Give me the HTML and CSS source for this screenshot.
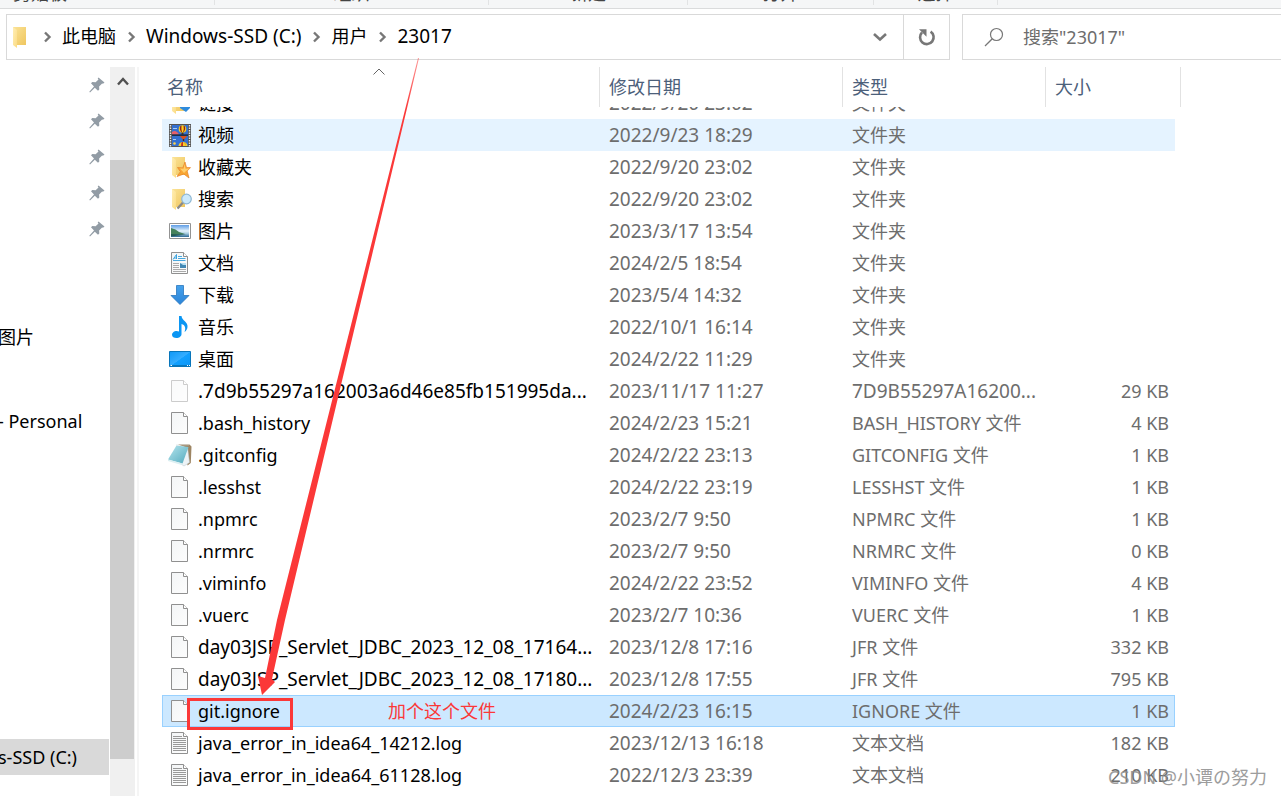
FILE: index.html
```html
<!DOCTYPE html>
<html lang="zh-CN">
<head>
<meta charset="utf-8">
<title>23017</title>
<link rel="stylesheet" href="styles.css">
</head>
<body>
<svg class="defs" aria-hidden="true">
  <defs>
    <linearGradient id="gFold" x1="0" y1="0" x2="1" y2="1"><stop offset="0" stop-color="#fbe397"/><stop offset="1" stop-color="#efc65f"/></linearGradient>
    <linearGradient id="gFoldFront" x1="0" y1="0" x2="1" y2="1"><stop offset="0" stop-color="#ffeeb5"/><stop offset="1" stop-color="#fbdb83"/></linearGradient>
    <linearGradient id="gSky" x1="0" y1="0" x2="0" y2="1"><stop offset="0" stop-color="#5e9de6"/><stop offset=".5" stop-color="#e3f2fb"/><stop offset=".7" stop-color="#a9cde0"/><stop offset="1" stop-color="#2a6795"/></linearGradient>
    <linearGradient id="gDown" x1="0" y1="0" x2="0" y2="1"><stop offset="0" stop-color="#45a2ed"/><stop offset="1" stop-color="#2b84d8"/></linearGradient>
    <linearGradient id="gDesk" x1="0" y1="0" x2="1" y2="1"><stop offset="0" stop-color="#0f98f7"/><stop offset=".5" stop-color="#35adff"/><stop offset=".52" stop-color="#12a0ff"/><stop offset="1" stop-color="#0c95f5"/></linearGradient>
    <linearGradient id="gPaper" x1="0" y1="0" x2="1" y2="1"><stop offset="0" stop-color="#f3f5f6"/><stop offset="1" stop-color="#fdfdfd"/></linearGradient>
    <linearGradient id="gNote" x1="0" y1="0" x2="1" y2="1"><stop offset="0" stop-color="#b5e5ee"/><stop offset="1" stop-color="#53aabd"/></linearGradient>
  </defs>
  <symbol id="folder" viewBox="0 0 24 24"><path d="M4 2h13v18H4z" fill="url(#gFold)"/><path d="M4 2l4 3v18l-4-3z" fill="url(#gFoldFront)"/></symbol>
  <symbol id="links" viewBox="0 0 24 24"><use href="#folder"/><path d="M12 12h7v3l3-2v4l-4 4-6-4z" fill="#2f8bdc"/></symbol>
  <symbol id="fav" viewBox="0 0 24 24"><use href="#folder"/><path d="M17 7l1.500 5.600H22.500l-3.300 3.400L21 23l-5.200-4L9 21.500l3.400-4.800L9.500 12.500l5.300.4z" fill="#f9a531" stroke="#e5812a" stroke-width=".7"/><path d="M16.800 9l.7 4.800 4-.4-3.500 2.700-2 2-4-4.500 3.500.2z" fill="#ffce6b"/></symbol>
  <symbol id="searches" viewBox="0 0 24 24"><use href="#folder"/><path d="M15 15.500L9.500 21.500" stroke="#8a8a8a" stroke-width="2.400"/><circle cx="18.500" cy="12" r="4.800" fill="#cbe9fb" stroke="#8fb7d3" stroke-width="1.200"/></symbol>
  <symbol id="video" viewBox="0 0 24 24"><path d="M1 1h22v23H1z" fill="#555"/><path d="M4 2h16v21H4z" fill="#3470d0"/><path d="M2.500 2v22M21.500 2v22" stroke="#e8e8e8" stroke-width="1.400" stroke-dasharray="1.500 1"/><path d="M4 9q4-3 7 2.500H4z" fill="#e7606a"/><path d="M5 5.500h4M5 16.500h3" stroke="#a9cdf5"/><circle cx="14.500" cy="6" r="3.800" fill="#ffce1a"/><path d="M12 3.500q-1 3 1 5.500h1q-1-3-.5-6.500zM17 3.500q1 3-1 5.500h-.8q1-3 .3-6.500z" fill="#8d2520"/><path d="M13.500 9.500h2v2h-2z" fill="#53320f"/><path d="M4 11.500h16v1.200H4z" fill="#151515"/><path d="M12 13h7l-2.500 3h-2z" fill="#d9501f"/><path d="M14.800 16h1.400v2h-1.400z" fill="#53320f"/><path d="M10.500 23q.5-4 4.500-4t4.500 4z" fill="#f7ce28"/><path d="M13 23q0-3 1-4h1v4zM17.500 23q0-3-1-4" fill="#c82d20"/><circle cx="6.500" cy="20.500" r="1.300" fill="#ffd34b"/></symbol>
  <symbol id="picture" viewBox="0 0 24 24"><path d="M1.500 4.500h21v15h-21z" fill="#fff" stroke="#939393"/><path d="M3 6h18v12H3z" fill="url(#gSky)"/><path d="M3 9q5 1 8 4l6 2-14 1z" fill="#45815b"/><path d="M3 15l15 .5-15 2z" fill="#245b55"/></symbol>
  <symbol id="blank" viewBox="0 0 24 24"><path d="M3.500 1.500h12l4 4v17h-16z" fill="url(#gPaper)" stroke="#909090"/><path d="M15.500 1.500v4h4" fill="#fff" stroke="#909090"/></symbol>
  <symbol id="document" viewBox="0 0 24 24"><use href="#blank"/><path d="M5 8.500L8.500 3.500V8M6 7h3" fill="none" stroke="#38a2df"/><path d="M10 5.500h4M10 7.500h7.500M5 9.500h12.500" stroke="#49a9df"/><path d="M5 12.500h6M5 14.500h6M5 16.500h6M5 18.500h13M5 20.500h13" stroke="#aaa"/><path d="M12 12h6v5h-6z" fill="#4389b5"/><path d="M12 12h6v2h-3z" fill="#b9e0f2"/></symbol>
  <symbol id="download" viewBox="0 0 24 24"><path d="M8.500 2.500h7v10h5.500l-9 9-9-9h5.500z" fill="url(#gDown)" stroke="#2a76bd" stroke-width=".8"/></symbol>
  <symbol id="music" viewBox="0 0 24 24"><path d="M11 1h2.500c.5 5 6.500 5.500 6 11-.2 2.500-1.600 4-3 5 1.500-4 .8-7-3-8v10c0 2.500-2.500 4-5 4s-4.500-1-4.500-3.200S6.500 16 8.500 16c1 0 1.800.2 2.500.5z" fill="#0b96f3"/></symbol>
  <symbol id="desktop" viewBox="0 0 24 24"><path d="M1.500 4.500h21v15h-21z" fill="url(#gDesk)" stroke="#0875ba"/><path d="M2 18.500h20" stroke="#0877bd"/><path d="M2.500 18.500h1.500M19 18.500h1M21 18.500h1" stroke="#fff"/></symbol>
  <symbol id="note" viewBox="0 0 24 24"><path d="M10 1.500h11.500l2 2-.7 16.500-3.300 2.500L17 4z" fill="#9d8563"/><path d="M19.500 4L21.500 19.500 16 23l-3-2z" fill="#edf3f6" stroke="#b5c4cc" stroke-width=".5"/><path d="M8.500 2.500L20.500 4 14.500 20.500 0 16.500z" fill="url(#gNote)"/><path d="M0 16.500l14.500 4-1 1.500L0 18z" fill="#dceff2"/><path d="M8.500 2h12.500" stroke="#c9d2d4" stroke-dasharray="1 1"/></symbol>
  <symbol id="log" viewBox="0 0 24 24"><use href="#blank"/><path d="M5 5.500h9M5 7.500h13M5 9.500h13M5 11.500h13M5 13.500h13M5 15.500h13M5 17.500h13M5 19.500h13" stroke="#999"/></symbol>
  <symbol id="pin" viewBox="0 0 16 16"><path d="M9.500.5l6 5-1.500 1.200-.9-.3-3 3 .2 3.100-1.300 1.200-3.200-3L1 15.500l-.7-.7L5 9.500 2 6.300 3.300 5l3.300.2 2.900-2.600-.8-1z" fill="#929ca5"/></symbol>
  <symbol id="sep" viewBox="0 0 8 12"><path d="M1.500 1.500L6 6l-4.500 4.500" fill="none" stroke="#777" stroke-width="2.400"/></symbol>
</svg>

<header class="ribbon">
  <span class="group g1">剪贴板</span><span class="group g2">组织</span><span class="group g3">新建</span><span class="group g4">打开</span><span class="group g5">选择</span>
</header>

<div class="toolbar">
  <div class="address">
    <svg class="icon" viewBox="0 0 24 24"><use href="#folder"/></svg>
    <nav class="crumbs">
      <svg class="sep"><use href="#sep"/></svg><a href="#">此电脑</a>
      <svg class="sep"><use href="#sep"/></svg><a class="latin" href="#">Windows-SSD (C:)</a>
      <svg class="sep"><use href="#sep"/></svg><a href="#">用户</a>
      <svg class="sep"><use href="#sep"/></svg><a class="latin" href="#">23017</a>
    </nav>
    <button class="drop" aria-label="历史"><svg width="16" height="10" viewBox="0 0 16 10"><path d="M2 2l6 5.500L14 2" fill="none" stroke="#777" stroke-width="2.600"/></svg></button>
    <button class="refresh" aria-label="刷新"><svg width="18" height="18" viewBox="0 0 18 18"><path d="M12.600 3.600A6.800 6.800 0 1 1 4 4.500" fill="none" stroke="#777" stroke-width="2.600"/><path d="M1 1.200h7.500v7.500z" fill="#777"/></svg></button>
  </div>
  <label class="search">
    <svg width="20" height="20" viewBox="0 0 20 20"><circle cx="12.500" cy="7.500" r="6" fill="none" stroke="#777" stroke-width="1.200"/><path d="M8.300 11.800L1 19" stroke="#777" stroke-width="1.300"/></svg>
    <input type="text" aria-label="搜索" placeholder='搜索"23017"'>
  </label>
</div>

<main class="main">
  <aside class="side">
    <div class="item"><svg class="pin"><use href="#pin"/></svg></div>
    <div class="item"><svg class="pin"><use href="#pin"/></svg></div>
    <div class="item"><svg class="pin"><use href="#pin"/></svg></div>
    <div class="item"><svg class="pin"><use href="#pin"/></svg></div>
    <div class="item"><svg class="pin"><use href="#pin"/></svg></div>
    <a class="item pics" href="#"><span>图片</span></a>
    <a class="item drive" href="#"><span>- Personal</span></a>
    <a class="item disk" href="#"><span>s-SSD (C:)</span></a>
  </aside>
  <div class="scroll"><svg class="up" width="12" height="9" viewBox="0 0 12 9"><path d="M1 7.500L6 2l5 5.500" fill="none" stroke="#505050" stroke-width="2.400"/></svg><div class="thumb"></div></div>
  <section class="files">
    <table>
      <colgroup><col class="c1"><col class="c2"><col class="c3"><col class="c4"><col class="c5"></colgroup>
      <thead><tr><th>名称<svg class="sort" width="12" height="7" viewBox="0 0 12 7"><path d="M.5 6.500L6 1l5.500 5.500" fill="none" stroke="#666"/></svg></th><th>修改日期</th><th>类型</th><th>大小</th><th></th></tr></thead>
      <tbody>
        <tr class="cut"><td><div class="name"><svg class="icon"><use href="#links"/></svg>链接</div></td><td><div>2022/9/20 23:02</div></td><td><div>文件夹</div></td><td></td></tr>
        <tr class="hover"><td><div class="name"><svg class="icon"><use href="#video"/></svg>视频</div></td><td>2022/9/23 18:29</td><td>文件夹</td><td></td></tr>
        <tr><td><div class="name"><svg class="icon"><use href="#fav"/></svg>收藏夹</div></td><td>2022/9/20 23:02</td><td>文件夹</td><td></td></tr>
        <tr><td><div class="name"><svg class="icon"><use href="#searches"/></svg>搜索</div></td><td>2022/9/20 23:02</td><td>文件夹</td><td></td></tr>
        <tr><td><div class="name"><svg class="icon"><use href="#picture"/></svg>图片</div></td><td>2023/3/17 13:54</td><td>文件夹</td><td></td></tr>
        <tr><td><div class="name"><svg class="icon"><use href="#document"/></svg>文档</div></td><td>2024/2/5 18:54</td><td>文件夹</td><td></td></tr>
        <tr><td><div class="name"><svg class="icon"><use href="#download"/></svg>下载</div></td><td>2023/5/4 14:32</td><td>文件夹</td><td></td></tr>
        <tr><td><div class="name"><svg class="icon"><use href="#music"/></svg>音乐</div></td><td>2022/10/1 16:14</td><td>文件夹</td><td></td></tr>
        <tr><td><div class="name"><svg class="icon"><use href="#desktop"/></svg>桌面</div></td><td>2024/2/22 11:29</td><td>文件夹</td><td></td></tr>
        <tr><td><div class="name latin"><svg class="icon faint"><use href="#blank"/></svg>.7d9b55297a162003a6d46e85fb151995da...</div></td><td>2023/11/17 11:27</td><td class="latin">7D9B55297A16200...</td><td>29 KB</td></tr>
        <tr><td><div class="name"><svg class="icon"><use href="#blank"/></svg>.bash_history</div></td><td>2024/2/23 15:21</td><td>BASH_HISTORY 文件</td><td>4 KB</td></tr>
        <tr><td><div class="name"><svg class="icon"><use href="#note"/></svg>.gitconfig</div></td><td>2024/2/22 23:13</td><td>GITCONFIG 文件</td><td>1 KB</td></tr>
        <tr><td><div class="name"><svg class="icon"><use href="#blank"/></svg>.lesshst</div></td><td>2024/2/22 23:19</td><td>LESSHST 文件</td><td>1 KB</td></tr>
        <tr><td><div class="name"><svg class="icon"><use href="#blank"/></svg>.npmrc</div></td><td>2023/2/7 9:50</td><td>NPMRC 文件</td><td>1 KB</td></tr>
        <tr><td><div class="name"><svg class="icon"><use href="#blank"/></svg>.nrmrc</div></td><td>2023/2/7 9:50</td><td>NRMRC 文件</td><td>0 KB</td></tr>
        <tr><td><div class="name"><svg class="icon"><use href="#blank"/></svg>.viminfo</div></td><td>2024/2/22 23:52</td><td>VIMINFO 文件</td><td>4 KB</td></tr>
        <tr><td><div class="name"><svg class="icon"><use href="#blank"/></svg>.vuerc</div></td><td>2023/2/7 10:36</td><td>VUERC 文件</td><td>1 KB</td></tr>
        <tr><td><div class="name latin"><svg class="icon"><use href="#blank"/></svg>day03JSP_Servlet_JDBC_2023_12_08_17164...</div></td><td>2023/12/8 17:16</td><td>JFR 文件</td><td>332 KB</td></tr>
        <tr><td><div class="name latin"><svg class="icon"><use href="#blank"/></svg>day03JSP_Servlet_JDBC_2023_12_08_17180...</div></td><td>2023/12/8 17:55</td><td>JFR 文件</td><td>795 KB</td></tr>
        <tr class="selected"><td><div class="name"><svg class="icon"><use href="#blank"/></svg>git.ignore</div></td><td>2024/2/23 16:15</td><td>IGNORE 文件</td><td>1 KB</td></tr>
        <tr><td><div class="name"><svg class="icon"><use href="#log"/></svg>java_error_in_idea64_14212.log</div></td><td>2023/12/13 16:18</td><td>文本文档</td><td>182 KB</td></tr>
        <tr><td><div class="name"><svg class="icon"><use href="#log"/></svg>java_error_in_idea64_61128.log</div></td><td>2022/12/3 23:39</td><td>文本文档</td><td>210 KB</td></tr>
      </tbody>
    </table>
  </section>
</main>

<svg class="arrow" width="440" height="700" viewBox="0 0 440 700" aria-hidden="true">
  <defs><linearGradient id="gArrow" gradientUnits="userSpaceOnUse" x1="0" y1="56" x2="0" y2="110"><stop offset="0" stop-color="#fb3838" stop-opacity=".5"/><stop offset="1" stop-color="#fb3838"/></linearGradient></defs>
  <path d="M418 58h1L285 620 272 679 275 682 262 695 258 676 265 678 277 620z" fill="url(#gArrow)"/>
</svg>
<div class="mark"></div>
<div class="remark">加个这个文件</div>
<div class="watermark">CSDN @小谭の努力</div>
</body>
</html>
```
FILE: styles.css
```css
* { box-sizing: border-box; }
body {
  margin: 0;
  height: 100vh;
  overflow: hidden;
  display: flex;
  flex-direction: column;
  background: #fff;
  color: #000;
  font: 18px/32px "Noto Sans", "Noto Sans CJK SC", sans-serif;
}
a { color: inherit; text-decoration: none; }
button { border: 0; padding: 0; background: none; display: flex; align-items: center; justify-content: center; }
.defs { position: absolute; width: 0; height: 0; }
.latin { font-size: 19px; }

.ribbon {
  display: flex;
  align-items: flex-start;
  flex: none;
  height: 9px;
  overflow: hidden;
  background: #f5f6f7;
  border-bottom: 1px solid #dadbdc;
}
.group {
  height: 5px;
  display: flex;
  align-items: flex-end;
  justify-content: center;
  padding-bottom: 2px;
  border-right: 1px solid #e2e3e4;
  color: #444;
  line-height: 20px;
}
.g1 { width: 215px; padding-right: 134px; }
.g2 { width: 274px; }
.g3 { width: 199px; }
.g4 { width: 186px; }
.g5 { width: 124px; }

.toolbar { display: flex; flex: none; gap: 12px; padding: 5px 0 0 6px; }
.address { flex: 1 1 944px; height: 46px; display: flex; align-items: center; border: 1px solid #d9d9d9; }
.search { flex: 0 1 319px; height: 46px; display: flex; align-items: center; gap: 19px; padding-left: 21px; border: 1px solid #d9d9d9; border-right: 0; }
.search input { min-width: 0; flex: 1; border: 0; padding: 0; outline: 0; background: none; font: inherit; color: #6d6d6d; }
.search input::placeholder { color: #6d6d6d; opacity: 1; }
.crumbs { flex: 1; display: flex; align-items: center; white-space: nowrap; }
.crumbs a { margin: 0 11px 2px 10px; }
.address .icon { margin-left: 2px; margin-right: 10px; }
.sep { width: 9px; height: 12px; }
.drop { width: 46px; height: 44px; }
.refresh { width: 46px; height: 44px; border-left: 1px solid #d9d9d9; }
.icon { width: 24px; height: 24px; flex: none; }
.faint { opacity: .45; }

.main { flex: 1; min-height: 0; display: flex; margin-top: 7px; }
.side { width: 110px; flex: none; padding-right: 1px; }
.item { height: 36px; display: flex; align-items: center; white-space: nowrap; }
.item span { margin-left: -2px; }
.pin { width: 16px; height: 16px; margin-left: auto; margin-right: 4px; }
.pics { margin-top: 72px; }
.drive { margin-top: 48px; }
.disk { margin-top: 300px; background: #d9d9d9; }
.scroll { width: 25px; flex: none; background: #f0f0f0; }
.up { display: block; margin: 10px 0 74px 7px; }
.thumb { width: 24px; height: 599px; background: #cdcdcd; }
.files { flex: 1; min-width: 0; overflow: hidden; margin-left: 2px; border-left: 2px solid #f5f5f5; padding-left: 23px; }

table { width: 1019px; table-layout: fixed; border-collapse: separate; border-spacing: 0; color: #6d6d6d; }
.c1 { width: 438px; }
.c2 { width: 243px; }
.c3 { width: 203px; }
.c4 { width: 129px; }
.c5 { width: 6px; }
th { position: relative; height: 40px; padding: 0 0 0 9px; text-align: left; font-weight: 400; color: #4c607a; border-right: 1px solid #e2e2e2; }
th:first-child { padding-left: 5px; }
th:nth-child(4) { border-right: 0; }
th:nth-child(5) { padding: 0; }
.sort { position: absolute; left: 50%; top: 1px; margin-left: -8px; }
td { height: 32px; padding: 0 0 0 9px; line-height: 32px; white-space: nowrap; }
td:first-child { padding-left: 6px; color: #000; }
td:nth-child(2) { font-size: 19px; }
td:nth-child(4) { text-align: right; padding: 0 6px 0 0; }
.name { display: flex; align-items: center; gap: 6px; height: 32px; overflow: hidden; }
.cut td { height: 12px; }
.cut td > div { height: 12px; display: flex; align-items: flex-end; overflow: hidden; }
.cut .icon { margin-bottom: 4px; }
.hover td { background: #e5f3ff; }
.selected td { background: #cce8ff; border: 1px solid #99d1ff; border-width: 1px 0; line-height: 30px; }
.selected .name { height: 30px; }
.selected td:first-child { border-left-width: 1px; padding-left: 5px; }
.selected td:nth-child(4) { border-right-width: 1px; padding-right: 5px; }

.arrow { position: absolute; left: 0; top: 0; pointer-events: none; }
.mark { position: absolute; left: 187px; top: 698px; width: 106px; height: 32px; border: 3px solid #fb3838; }
.remark { position: absolute; left: 388px; top: 695px; color: #fb3838; }
.watermark { position: absolute; right: 14px; bottom: 3px; color: #8c8c8c; opacity: .85; }
```
